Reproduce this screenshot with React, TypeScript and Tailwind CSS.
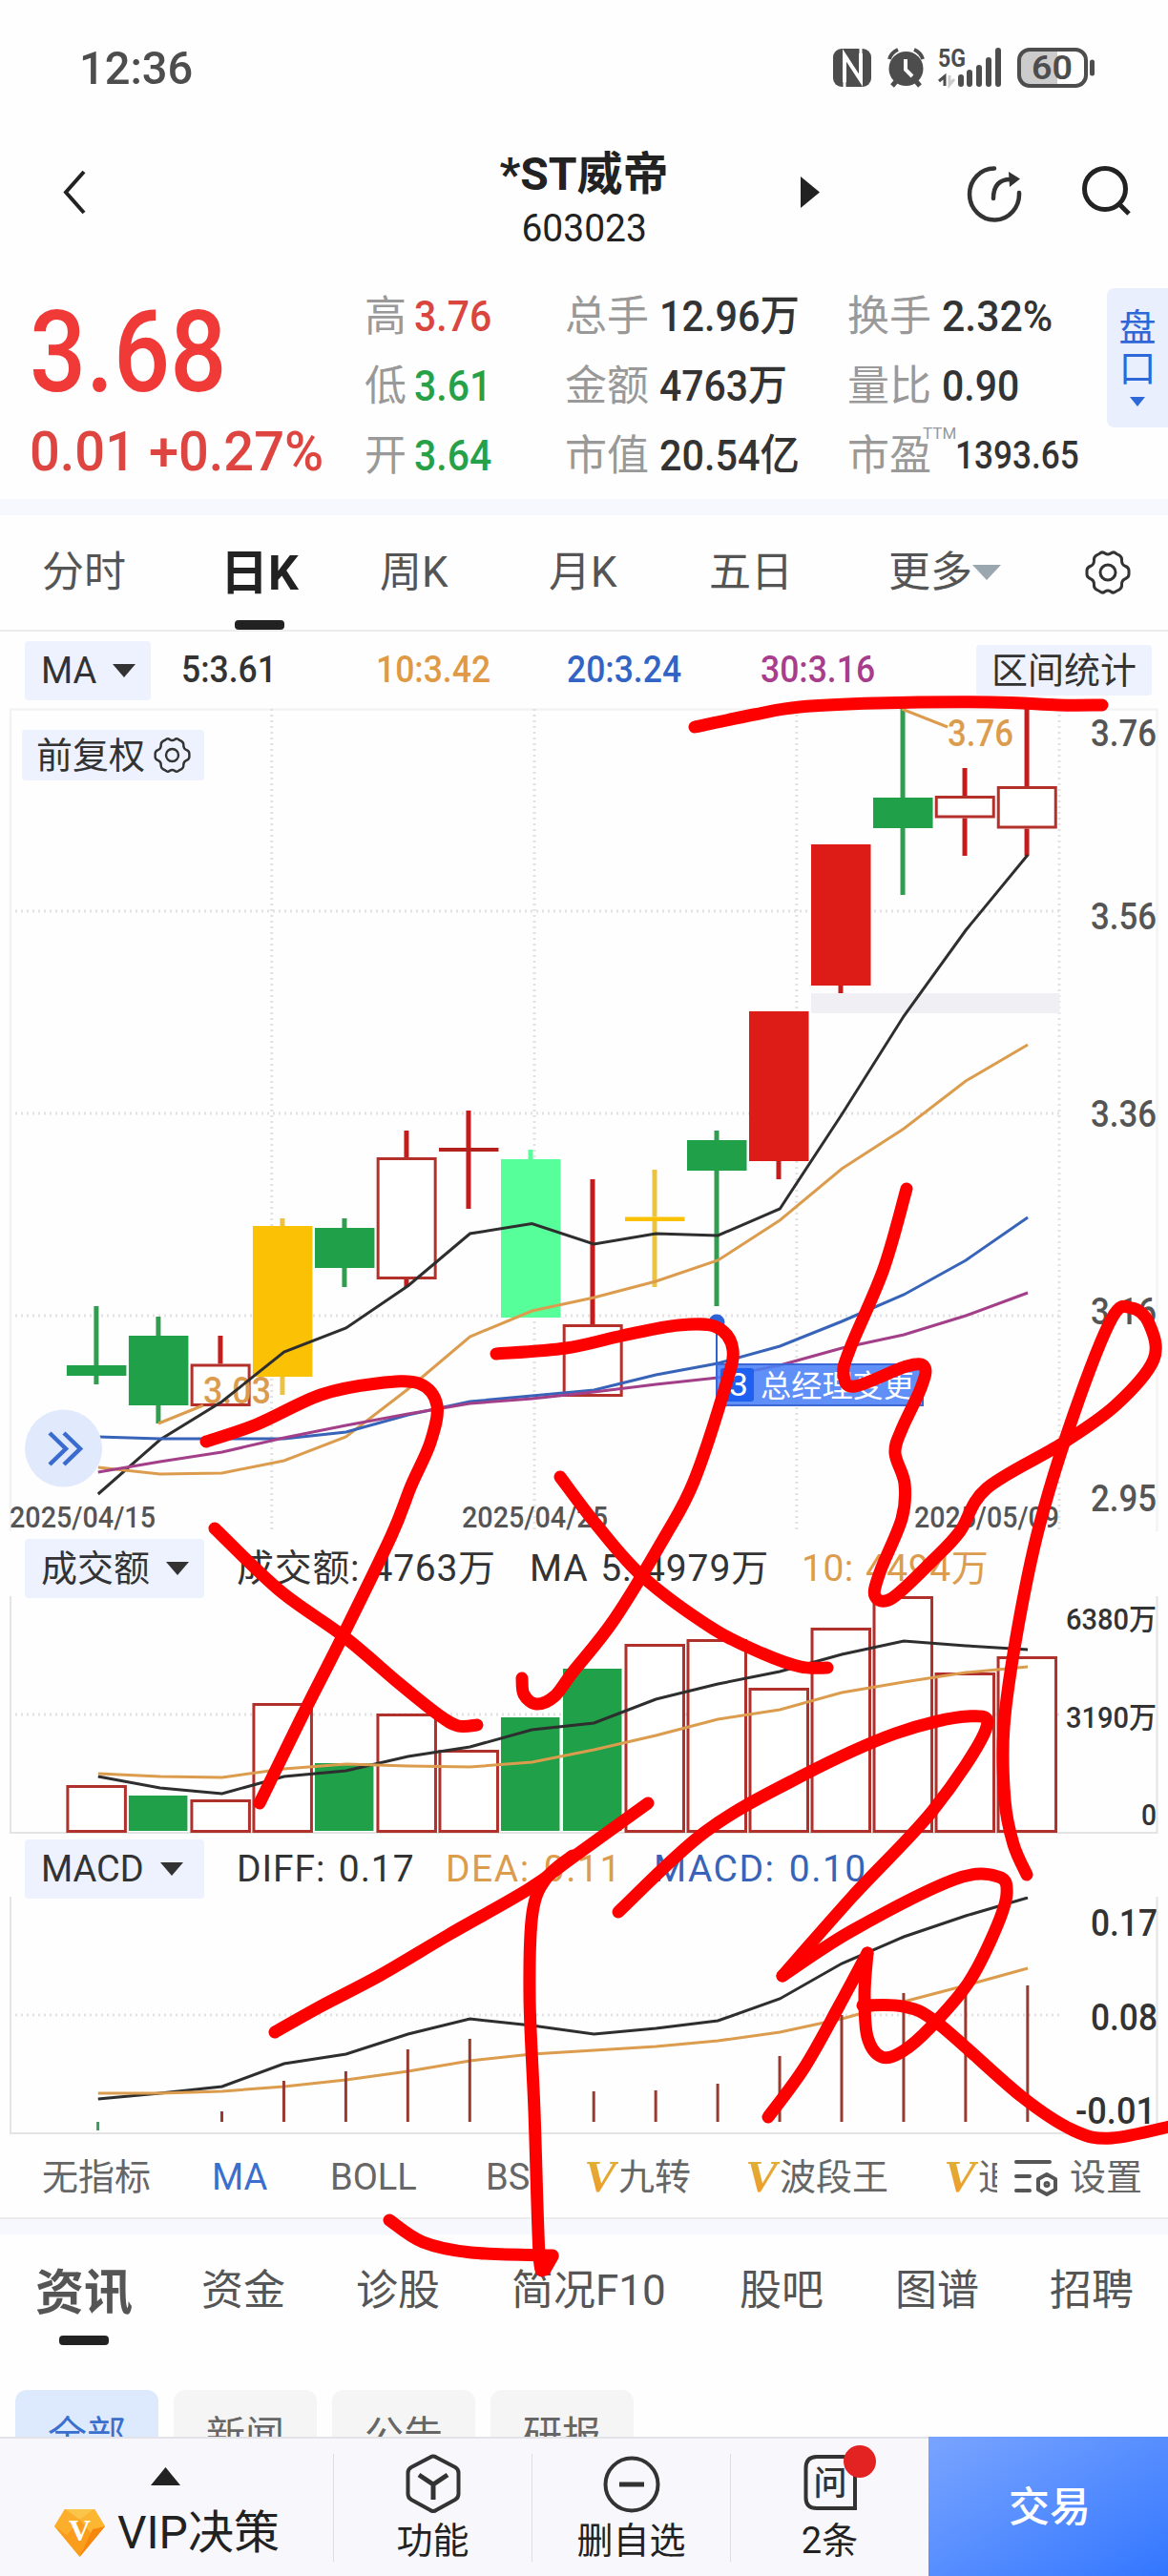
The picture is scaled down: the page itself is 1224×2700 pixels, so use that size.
import type { ReactNode } from "react"

type Candle = {
  kind: "up" | "down" | "limit" | "gold" | "mint"
  high: number
  top: number
  bottom: number
  low: number
}

const RED = "#b3302b"
const ORANGE = "#dc9c4e"

const candles: Candle[] = [
  { kind: "down", high: 1369, top: 1431, bottom: 1442, low: 1451 },
  { kind: "down", high: 1380, top: 1400, bottom: 1473, low: 1492 },
  { kind: "up", high: 1400, top: 1429.5, bottom: 1474, low: 1474 },
  { kind: "gold", high: 1277, top: 1285, bottom: 1443, low: 1462 },
  { kind: "down", high: 1277, top: 1287, bottom: 1329, low: 1349 },
  { kind: "up", high: 1185, top: 1213, bottom: 1341, low: 1349 },
  { kind: "up", high: 1164, top: 1203, bottom: 1207, low: 1267 },
  { kind: "mint", high: 1205, top: 1215, bottom: 1381, low: 1381 },
  { kind: "up", high: 1236, top: 1388, bottom: 1464, low: 1464 },
  { kind: "gold", high: 1226, top: 1275.5, bottom: 1280, low: 1349 },
  { kind: "down", high: 1185, top: 1195, bottom: 1227, low: 1369 },
  { kind: "limit", high: 1060, top: 1060, bottom: 1217, low: 1236 },
  { kind: "limit", high: 885, top: 885, bottom: 1033, low: 1041 },
  { kind: "down", high: 742, top: 836, bottom: 868, low: 938 },
  { kind: "up", high: 805, top: 834, bottom: 857.5, low: 897 },
  { kind: "up", high: 742, top: 824, bottom: 868.5, low: 897 },
]

const fills = { up: "#ffffff", down: "#1fa049", limit: "#de1c17", gold: "#fac105", mint: "#57ff9a" }
const wicks = { up: "#c41c1a", down: "#329c50", limit: "#c41c1a", gold: "#ecc243", mint: "#57ff9a" }

const ma5 = [1566, 1509, 1469, 1417, 1392, 1347.7, 1293, 1282.5, 1304, 1293, 1295, 1267, 1168, 1065, 975, 896]
const ma10 = [1538, 1545, 1544, 1531, 1506, 1456, 1401, 1374, 1360, 1343, 1321, 1279, 1225, 1183, 1133, 1095]
const ma20 = [1506, 1508, 1508, 1508, 1501, 1483, 1469, 1463, 1457, 1441, 1429, 1411, 1385, 1357, 1321, 1276]
const ma30 = [1543, 1532, 1522, 1507, 1494, 1482, 1471, 1466, 1459, 1451, 1444, 1431, 1413, 1399, 1379, 1355]

const volumes = [1871, 1882, 1886, 1785, 1848, 1796, 1834, 1800, 1749, 1723, 1718, 1769, 1706, 1673, 1753, 1736]
const volumeDown = [1, 4, 7, 8]
const volMa5 = [1862, 1874, 1880, 1862, 1856, 1841, 1831, 1813, 1806, 1781, 1765, 1752, 1734, 1720, 1725, 1729]
const volMa10 = [1859, 1862, 1863, 1854, 1849, 1851, 1852, 1847, 1834, 1819, 1802, 1792, 1774, 1763, 1753, 1747]

const diff = [2200, 2194, 2187, 2163, 2153, 2132, 2116, 2123, 2132, 2126, 2118, 2095, 2058, 2030, 2008, 1989]
const dea = [2194, 2194, 2192, 2187, 2180, 2171, 2160, 2153, 2149, 2145, 2139, 2130, 2116, 2098, 2081, 2063]
const macd = [2233, 2224, 2213, 2181, 2171, 2148, 2137, 2180, 2192, 2191, 2184, 2155, 2112, 2089, 2084, 2081]

const strokes: number[][][] = [
  [[728, 762], [790, 749], [838, 741], [918, 737], [1038, 736], [1109, 739], [1155, 739]],
  [[216, 1511], [269, 1493], [336, 1462], [395, 1450], [439, 1450], [458, 1473], [451, 1512], [431, 1557], [410, 1610], [360, 1713], [316, 1800], [272, 1890]],
  [[225, 1602], [293, 1667], [360, 1715], [419, 1765], [459, 1797], [480, 1809], [500, 1808]],
  [[520, 1419], [593, 1413], [652, 1400], [711, 1389], [751, 1391], [768, 1415], [759, 1457], [727, 1553], [697, 1610], [644, 1697], [600, 1753], [581, 1778], [562, 1786], [549, 1776], [547, 1759]],
  [[587, 1548], [625, 1598], [674, 1653], [747, 1707], [799, 1733], [839, 1747], [867, 1748]],
  [[950, 1246], [926, 1330], [891, 1413], [884, 1440], [896, 1453], [950, 1432], [969, 1433], [965, 1455], [945, 1498], [938, 1523], [948, 1555], [945, 1592], [922, 1648], [917, 1673], [935, 1675], [978, 1635], [1006, 1605], [1034, 1560], [1113, 1513], [1169, 1473], [1209, 1425], [1204, 1387], [1186, 1371], [1165, 1382], [1125, 1483], [1089, 1600], [1066, 1710], [1052, 1810], [1053, 1887], [1062, 1933], [1076, 1965]],
  [[679, 1890], [600, 1947], [554, 1980], [470, 2028], [399, 2070], [336, 2103], [288, 2130]],
  [[600, 1945], [573, 1968], [558, 2005], [555, 2093], [560, 2213], [565, 2363], [570, 2378]],
  [[408, 2327], [443, 2350], [494, 2361], [579, 2364]],
  [[579, 2365], [571, 2379]],
  [[648, 2004], [739, 1920], [839, 1862], [938, 1817], [1014, 1799], [1033, 1813], [978, 1897], [894, 1987], [820, 2071]],
  [[820, 2071], [894, 2023], [1000, 1970], [1046, 1967], [1055, 1985], [1043, 2023], [1015, 2078], [975, 2125], [946, 2150], [924, 2156], [909, 2135], [906, 2090], [909, 2047]],
  [[909, 2047], [879, 2103], [843, 2167], [805, 2219]],
  [[904, 2102], [946, 2103], [982, 2120], [1070, 2197], [1125, 2233], [1165, 2241], [1230, 2228]],
]

function smooth(points: number[][]) {
  let d = `M${points[0][0]} ${points[0][1]}`
  for (let i = 0; i < points.length - 1; i++) {
    const p0 = points[i - 1] ?? points[i]
    const p1 = points[i]
    const p2 = points[i + 1]
    const p3 = points[i + 2] ?? p2
    d += ` C${p1[0] + (p2[0] - p0[0]) / 6} ${p1[1] + (p2[1] - p0[1]) / 6} ${p2[0] - (p3[0] - p1[0]) / 6} ${p2[1] - (p3[1] - p1[1]) / 6} ${p2[0]} ${p2[1]}`
  }
  return d
}

const centerX = (i: number) => 100.9 + i * 65.01

function Series({ values, color }: { values: number[]; color: string }) {
  const points = values.map((y, i) => `${102.8 + i * 64.95},${y}`).join(" ")
  return <polyline points={points} fill="none" stroke={color} strokeWidth="3" />
}

function GridLine({ x1, y1, x2, y2 }: { x1: number; y1: number; x2: number; y2: number }) {
  return <line x1={x1} y1={y1} x2={x2} y2={y2} stroke="#e2e2e2" strokeWidth="3" strokeDasharray="2 4" />
}

function Label({ x, y, size, width, color, children, weight = 500 }: { x: number; y: number; size: number; width: number; color: string; children: string; weight?: number }) {
  return (
    <text x={x} y={y} fontSize={size} fill={color} fontWeight={weight} textLength={width} lengthAdjust="spacingAndGlyphs">
      {children}
    </text>
  )
}

function Gear({ size }: { size: number }) {
  return (
    <svg width={size} height={size} viewBox="0 0 48 48" fill="none" stroke="#333" strokeWidth="3">
      <path d="M15 4.500Q18 1.500 21 4q3 2 6 0 3-2.500 6 .5l3 1.500q3 2 2.500 5.500 0 4.500 4 6Q46 19 46 22v4q0 3-3.500 4.500-4 1.500-4 6Q39 40 36 42l-3 1.500q-3 3-6 .5-3-2-6 0-3 2.500-6-.5L12 42q-3-2-2.500-5.500 0-4.500-4-6Q2 29 2 26v-4q0-3 3.500-4.500 4-1.500 4-6Q9 8 12 6z" strokeLinejoin="round" />
      <circle cx="24" cy="24" r="8" />
    </svg>
  )
}

function Caret() {
  return (
    <svg width="24" height="14" viewBox="0 0 24 14" fill="#333">
      <path d="M0 0h24L12 14z" />
    </svg>
  )
}

function StatusBar() {
  return (
    <div className="flex h-[142px] items-center justify-between pr-[76px] pl-[83px] text-[#4d4d4d]">
      <span className="origin-left scale-x-[0.96] text-[49px] leading-none font-medium">12:36</span>
      <svg width="276" height="44" viewBox="871 49 276 44" fill="none" stroke="#4d4d4d">
        <rect x="872" y="51" width="40" height="40" rx="9" fill="#4d4d4d" stroke="none" />
        <path d="M884 86V58L901 84V56" stroke="#fff" strokeWidth="4" />
        <path d="M884 58V91M901 51V84" stroke="#fff" strokeWidth="3" />
        <circle cx="948.500" cy="72" r="18" fill="#4d4d4d" stroke="none" />
        <path d="M931 62q2-7 9-10M966 62q-2-7-9-10" strokeWidth="4" />
        <path d="M934 90l6-7M963 90l-6-7" strokeWidth="5" />
        <path d="M948 62v11l7 7" stroke="#fff" strokeWidth="4" />
        <text x="982" y="70" fontSize="25" fontWeight="700" fill="#4d4d4d" stroke="none" textLength="29" lengthAdjust="spacingAndGlyphs">5G</text>
        <path d="M989 90V80l-6 5" strokeWidth="3" />
        <path d="M994 79v10l5-6" stroke="#ccc" strokeWidth="3" />
        <path d="M1006 81v7M1015 76v12M1025 71v17M1035 63v25M1045 53v35" strokeWidth="6" strokeLinecap="round" />
        <path d="M1076 52h31v38h-31q-9-1-9-10V62q0-9 9-10z" fill="#ccc" stroke="none" />
        <rect x="1067" y="52" width="70" height="38" rx="11" strokeWidth="4" />
        <path d="M1143.500 65v12" strokeWidth="5" strokeLinecap="round" />
        <text x="1080" y="83" fontSize="35" fontWeight="600" fill="#4d4d4d" stroke="none" textLength="43" lengthAdjust="spacingAndGlyphs">60</text>
      </svg>
    </div>
  )
}

function TitleBar() {
  return (
    <header className="grid h-[138px] grid-cols-[432px_360px_1fr] text-[#222]">
      <svg className="mt-[35px] ml-[64px]" width="30" height="50" viewBox="0 0 30 50" fill="none" stroke="#222" strokeWidth="4">
        <path d="M24 3L5 24.500L24 46" />
      </svg>
      <div className="flex flex-col items-center pt-[17px]">
        <h1 className="text-[48px] leading-[48px] font-bold">*ST威帝</h1>
        <p className="mt-[9px] scale-x-[0.95] text-[41px] leading-[46px]">603023</p>
      </div>
      <div className="flex items-start">
        <svg className="mt-[43px] ml-[47px]" width="20" height="33" viewBox="0 0 20 33" fill="#222">
          <path d="M0 0L20 16.500L0 33z" />
        </svg>
        <svg className="mt-[29px] ml-[151px]" width="64" height="64" viewBox="0 0 64 64" fill="none" stroke="#333" strokeWidth="4.500">
          <path d="M32 5.500A26 27 0 1 0 58 31" strokeLinecap="round" />
          <path d="M31 37Q31 17 49 17" strokeLinecap="round" />
          <path d="M47 9L59 16.500L48 25z" fill="#333" stroke="none" />
        </svg>
        <svg className="mt-[31px] ml-[58px]" width="56" height="56" viewBox="0 0 56 56" fill="none" stroke="#222" strokeWidth="5">
          <circle cx="26" cy="25" r="21.500" />
          <path d="M41 41L51 51" />
        </svg>
      </div>
    </header>
  )
}

function Stat({ label, value, color = "text-[#333]", gap = "ml-[11px]", scale = "scale-x-[0.91]" }: { label: string; value: string; color?: string; gap?: string; scale?: string }) {
  return (
    <div className="flex h-[73px] items-center whitespace-nowrap">
      <span className="text-[44px] leading-none text-[#999]">{label}</span>
      <span className={`${gap} ${color} ${scale} origin-left text-[45px] leading-none font-medium`}>{value}</span>
    </div>
  )
}

function Quote() {
  return (
    <section className="flex h-[243px]">
      <div className="w-[382px] pl-[31px]">
        <div className="mt-[28px] h-[120px] origin-left scale-x-[0.875] text-[119px] leading-[124px] font-medium text-[#f03a38]">3.68</div>
        <div className="mt-[13px] origin-left scale-x-[0.965] text-[58px] leading-[64px] font-medium whitespace-nowrap text-[#de4440]">0.01 +0.27%</div>
      </div>
      <div className="grid h-[219px] w-[778px] grid-cols-[210px_296px_272px] pt-[15px]">
        <Stat label="高" value="3.76" color="text-[#d9453f]" gap="ml-[8px]" />
        <Stat label="总手" value="12.96万" scale="scale-x-[0.92]" />
        <Stat label="换手" value="2.32%" scale="scale-x-[0.95]" />
        <Stat label="低" value="3.61" color="text-[#27a148]" gap="ml-[8px]" />
        <Stat label="金额" value="4763万" />
        <Stat label="量比" value="0.90" />
        <Stat label="开" value="3.64" color="text-[#27a148]" gap="ml-[8px]" />
        <Stat label="市值" value="20.54亿" scale="scale-x-[0.92]" />
        <div className="flex h-[73px] items-center whitespace-nowrap">
          <span className="text-[44px] leading-none text-[#999]">市盈</span>
          <span className="-ml-[9px] w-[34px] pb-[46px] text-[17px] leading-none text-[#999]">TTM</span>
          <span className="origin-left scale-x-[0.88] text-[40px] leading-none font-medium text-[#333]">1393.65</span>
        </div>
      </div>
      <div className="mt-[22px] flex h-[146px] w-[64px] flex-col items-center rounded-l-[8px] bg-[#e9effd] pt-[21px] text-[39px] leading-[43px] text-[#2e67d8]">
        <span>盘</span>
        <span>口</span>
        <svg className="mt-[7px]" width="16" height="10" viewBox="0 0 16 10" fill="#2e67d8">
          <path d="M0 0h16L8 10z" />
        </svg>
      </div>
    </section>
  )
}

function PeriodTabs() {
  return (
    <nav className="grid h-[122px] grid-cols-[187px_167px_177px_168px_188px_206px_1fr] items-center border-b-2 border-[#ececec] pl-[44px] text-[44px] leading-none whitespace-nowrap text-[#555]">
      <span>分时</span>
      <div className="flex h-full w-[82px] flex-col items-center justify-end">
        <span className="text-[50px] font-bold text-[#222]">日K</span>
        <i className="mt-[24px] h-[10px] w-[52px] rounded-[4px] bg-[#222]" />
      </div>
      <span>周K</span>
      <span>月K</span>
      <span>五日</span>
      <span className="flex items-center">
        更多
        <svg width="30" height="16" viewBox="0 0 30 16" fill="#9aa7ae">
          <path d="M0 0h30L15 16z" />
        </svg>
      </span>
      <Gear size={48} />
    </nav>
  )
}

function Chip({ children, className }: { children: string; className: string }) {
  return (
    <div className={`${className} flex h-[62px] items-center rounded-[4px] bg-[#edf2fe] pl-[17px] text-[38px] leading-none whitespace-nowrap text-[#333]`}>
      <span className="mr-[17px]">{children}</span>
      <Caret />
    </div>
  )
}

function PriceChart() {
  return (
    <svg className="block" width="1224" height="863" viewBox="0 742 1224 863">
      <path d="M11 1605V743.500H1212.500V1605" fill="none" stroke="#f3f3f3" strokeWidth="2.500" />
      {[284.7, 560, 834.8, 1110].map((x) => (
        <GridLine key={x} x1={x} y1={743} x2={x} y2={1604} />
      ))}
      {[955, 1167, 1379].map((y) => (
        <GridLine key={y} x1={16} y1={y} x2={1110} y2={y} />
      ))}
      <rect x="850" y="1041" width="260.500" height="21" fill="#f0eff4" />
      {candles.map((c, i) => {
        const x = centerX(i)
        const hollow = c.kind === "up" && c.bottom - c.top > 6
        return (
          <g key={i}>
            <line x1={x} x2={x} y1={c.high} y2={c.top} stroke={wicks[c.kind]} strokeWidth="5" />
            <line x1={x} x2={x} y1={c.bottom} y2={c.low} stroke={wicks[c.kind]} strokeWidth="5" />
            {hollow ? (
              <rect x={x - 29.8} y={c.top + 1.5} width="60" height={c.bottom - c.top - 3} fill="#fff" stroke={RED} strokeWidth="3" />
            ) : (
              <rect x={x - 31} y={c.top} width="62.500" height={c.bottom - c.top} fill={c.kind === "up" ? "#b3201e" : fills[c.kind]} />
            )}
          </g>
        )
      })}
      <path d="M166 1492L213 1473M945 743L993 762" stroke={ORANGE} strokeWidth="3" />
      <Label x={213} y={1471} size={38} width={71} color={ORANGE}>3.03</Label>
      <Label x={993} y={782} size={38} width={69} color={ORANGE}>3.76</Label>
      <Series values={ma5} color="#2e2e2e" />
      <Series values={ma10} color={ORANGE} />
      <Series values={ma20} color="#3763b8" />
      <Series values={ma30} color="#a33f88" />
      <path d="M751 1385V1430" stroke="#2e63d0" strokeWidth="2" />
      <circle cx="751" cy="1386" r="8.500" fill="#2e63d8" />
      <rect x="751" y="1430" width="216" height="43" fill="#4a80f7" fillOpacity="0.88" stroke="#3b68d4" strokeWidth="2" />
      <rect x="755" y="1434" width="35" height="35" rx="3" fill="#1e60f0" />
      <Label x={764} y={1463} size={34} width={20} color="#fff" weight={400}>3</Label>
      <Label x={797} y={1464} size={32} width={161} color="#fff" weight={400}>总经理变更</Label>
      <circle cx="66.600" cy="1518" r="40.500" fill="#e1eafc" />
      <path d="M52 1502L69 1518.500L52 1535M67 1502L84 1518.500L67 1535" fill="none" stroke="#3a6cd0" strokeWidth="4.500" />
      <Label x={1143} y={782} size={38} width={69} color="#555">3.76</Label>
      <Label x={1143} y={974} size={38} width={69} color="#555">3.56</Label>
      <Label x={1143} y={1181} size={38} width={69} color="#555">3.36</Label>
      <Label x={1143} y={1388} size={38} width={69} color="#555">3.16</Label>
      <Label x={1143} y={1584} size={38} width={69} color="#555">2.95</Label>
      <Label x={10} y={1601} size={31} width={153} color="#555">2025/04/15</Label>
      <Label x={484} y={1601} size={31} width={153} color="#555">2025/04/25</Label>
      <Label x={958} y={1601} size={31} width={152} color="#555">2025/05/09</Label>
    </svg>
  )
}

function VolumeChart() {
  return (
    <svg className="block" width="1224" height="250" viewBox="0 1673 1224 250">
      <path d="M11 1673V1921H1212.500V1673" fill="none" stroke="#e4e4e4" strokeWidth="2" />
      <GridLine x1={16} y1={1797} x2={1110} y2={1797} />
      {volumes.map((top, i) =>
        volumeDown.includes(i) ? (
          <rect key={i} x={centerX(i) - 31} y={top} width="61.500" height={1919 - top} fill="#1fa049" />
        ) : (
          <rect key={i} x={centerX(i) - 30} y={top + 1.5} width="60.500" height={1918 - top} fill="#fff" stroke="#b0302c" strokeWidth="3" />
        ),
      )}
      <Series values={volMa5} color="#2e2e2e" />
      <Series values={volMa10} color={ORANGE} />
      <Label x={1117} y={1708} size={31} width={95} color="#333">6380万</Label>
      <Label x={1117} y={1811} size={31} width={95} color="#333">3190万</Label>
      <Label x={1196} y={1913} size={31} width={16} color="#333">0</Label>
    </svg>
  )
}

function MacdChart() {
  return (
    <svg className="block" width="1224" height="250" viewBox="0 1988 1224 250">
      <path d="M11 1988V2236H1212.500V1988" fill="none" stroke="#e4e4e4" strokeWidth="2" />
      <GridLine x1={16} y1={2112} x2={1110} y2={2112} />
      <Series values={diff} color="#2e2e2e" />
      <Series values={dea} color={ORANGE} />
      {macd.map((y, i) => (
        <line key={i} x1={102.6 + i * 64.95} x2={102.6 + i * 64.95} y1={2224} y2={y} stroke={y > 2224 ? "#3c9a5a" : "#983a30"} strokeWidth="3" />
      ))}
      <Label x={1143} y={2029} size={38} width={70} color="#333">0.17</Label>
      <Label x={1143} y={2128} size={38} width={70} color="#333">0.08</Label>
      <Label x={1127} y={2226} size={38} width={84} color="#333">-0.01</Label>
    </svg>
  )
}

function VipMark() {
  return (
    <svg className="shrink-0" width="34" height="32" viewBox="0 0 34 32">
      <defs>
        <linearGradient id="vip" x1="0" y1="0" x2="0" y2="1">
          <stop offset="0" stopColor="#dcb23c" />
          <stop offset="1" stopColor="#f19a25" />
        </linearGradient>
      </defs>
      <text x="-2" y="31" fontSize="46" fontWeight="700" fontStyle="italic" fontFamily="Liberation Serif, serif" fill="url(#vip)" textLength="34" lengthAdjust="spacingAndGlyphs">V</text>
    </svg>
  )
}

function IndicatorTabs() {
  return (
    <nav className="flex h-[88px] items-center border-b-2 border-[#ececec] pt-[2px] pl-[44px] text-[38px] leading-none whitespace-nowrap text-[#666]">
      <div className="grid w-[1001px] grid-cols-[178px_124px_163px_105px_169px_208px_54px] items-center overflow-hidden py-1">
        <span>无指标</span>
        <span className="text-[#3a6fcd]">MA</span>
        <span>BOLL</span>
        <span>BS</span>
        <span className="flex items-center"><VipMark />九转</span>
        <span className="flex items-center"><VipMark />波段王</span>
        <span className="flex items-center overflow-hidden"><VipMark />追</span>
      </div>
      <svg className="ml-[17px]" width="48" height="40" viewBox="0 0 48 40" fill="none" stroke="#555" strokeWidth="4" strokeLinecap="round">
        <path d="M3 4H38M3 19H17M3 34H17" />
        <path d="M35 17l9 5v11l-9 5-9-5V22z" strokeLinejoin="round" />
        <circle cx="35" cy="27.500" r="2" strokeWidth="3" />
      </svg>
      <span className="ml-[11px]">设置</span>
    </nav>
  )
}

function News() {
  return (
    <section className="h-[212px] overflow-hidden">
      <nav className="grid h-[116px] grid-cols-[174px_162px_163px_239px_163px_162px_1fr] items-center pl-[37px] text-[44px] leading-none whitespace-nowrap text-[#555]">
        <div className="flex h-full w-[102px] flex-col items-center justify-end">
          <span className="text-[51px] font-bold">资讯</span>
          <i className="mt-[19px] h-[10px] w-[52px] rounded-[4px] bg-[#222]" />
        </div>
        <span className="pt-[2px]">资金</span>
        <span className="pt-[2px]">诊股</span>
        <span className="pt-[2px]">简况F10</span>
        <span className="pt-[2px]">股吧</span>
        <span className="pt-[2px]">图谱</span>
        <span className="pt-[2px]">招聘</span>
      </nav>
      <div className="mt-[47px] flex gap-[16px] pl-[16px] text-[41px] leading-none text-[#666]">
        <span className="h-[100px] w-[150px] rounded-[12px] bg-[#dde9fd] pt-[28px] text-center text-[#3a6fcd]">全部</span>
        <span className="h-[100px] w-[150px] rounded-[12px] bg-[#f5f5f5] pt-[28px] text-center">新闻</span>
        <span className="h-[100px] w-[150px] rounded-[12px] bg-[#f5f5f5] pt-[28px] text-center">公告</span>
        <span className="h-[100px] w-[150px] rounded-[12px] bg-[#f5f5f5] pt-[28px] text-center">研报</span>
      </div>
    </section>
  )
}

function ActionItem({ label, children }: { label: string; children: ReactNode }) {
  return (
    <div className="flex h-[113px] w-[208px] flex-col items-center border-l border-[#dcdce4] text-[38px] leading-none text-[#222]">
      <div className="h-[68px]">{children}</div>
      <span className="mt-[4px]">{label}</span>
    </div>
  )
}

function BottomBar() {
  return (
    <footer className="flex h-[146px] items-center border-t-2 border-[#e2e2e8] bg-[#f8f7fc]">
      <div className="flex h-full w-[349px] flex-col pl-[56px]">
        <svg className="mt-[30px] ml-[102px]" width="31" height="19" viewBox="0 0 31 19" fill="#222">
          <path d="M15.500 0L31 19H0z" />
        </svg>
        <div className="mt-[24px] flex items-center text-[48px] leading-none whitespace-nowrap text-[#222]">
          <svg className="mr-[12px]" width="55" height="52" viewBox="0 0 55 52">
            <path d="M12 1H43L54 19L27.500 51L1 19z" fill="#fb9d1c" />
            <path d="M12 1H43L27.500 12z" fill="#fbc54a" />
            <path d="M12 1L27.500 12L14 28L1 19z" fill="#fdaf2b" />
            <path d="M43 1L27.500 12L41 28L54 19z" fill="#fcb632" />
            <path d="M27.500 51L54 19L41 22z" fill="#f6870f" />
            <text x="27.500" y="34" textAnchor="middle" fontSize="32" fontWeight="700" fontFamily="Liberation Serif, serif" fill="#fff">V</text>
          </svg>
          VIP决策
        </div>
      </div>
      <ActionItem label="功能">
        <svg width="58" height="62" viewBox="0 0 58 62" fill="none" stroke="#333" strokeWidth="4">
          <path d="M26 3.500q3-2 6 0L52 14q3.500 2 3.500 6V42q0 4-3.500 6L32 59q-3 2-6 0L6 48q-3.500-2-3.500-6V20q0-4 3.500-6z" />
          <path d="M14 22L29 32L44 22M29 32V48" strokeWidth="5" />
        </svg>
      </ActionItem>
      <ActionItem label="删自选">
        <svg width="60" height="62" viewBox="0 0 60 62" fill="none" stroke="#333" strokeWidth="4">
          <circle cx="30" cy="32" r="27.500" />
          <path d="M17 32H43" strokeWidth="5" />
        </svg>
      </ActionItem>
      <ActionItem label="2条">
        <div className="relative">
          <svg width="56" height="62" viewBox="0 0 56 62" fill="none" stroke="#333" strokeWidth="4">
            <path d="M54 15V57H14Q2.500 57 2.500 46V15Q2.500 3 14 3H42Q54 3 54 15z" />
            <text x="28" y="43" textAnchor="middle" fontSize="35" fontWeight="500" fill="#333" stroke="none">问</text>
          </svg>
          <i className="absolute -top-[9px] -right-[20px] h-[34px] w-[34px] rounded-full bg-[#e32321]" />
        </div>
      </ActionItem>
      <button className="-mt-[2px] flex h-[146px] grow items-center justify-center bg-linear-to-br from-[#79a4ff] to-[#3276ff] pt-[2px] pl-[3px] text-[43px] leading-none font-medium text-white">交易</button>
    </footer>
  )
}

export default function App() {
  return (
    <main className="relative h-[2700px] w-[1224px] overflow-hidden bg-[#fefefe] font-[Roboto,'Noto_Sans_CJK_SC',sans-serif]">
      <StatusBar />
      <TitleBar />
      <Quote />
      <div className="h-[17px] bg-[#f6f8fd]" />
      <PeriodTabs />
      <div className="grid h-[80px] grid-cols-[164px_204px_200px_203px_226px_184px] items-center pt-px pl-[26px] text-[39px] leading-none font-medium whitespace-nowrap text-[#333]">
        <Chip className="w-[132px] font-normal">MA</Chip>
        <span className="origin-left scale-x-[0.91]">5:3.61</span>
        <span className="origin-left scale-x-[0.91] text-[#e09a45]">10:3.42</span>
        <span className="origin-left scale-x-[0.91] text-[#3164c4]">20:3.24</span>
        <span className="origin-left scale-x-[0.91] text-[#a83d8c]">30:3.16</span>
        <span className="flex h-[53px] items-center justify-center rounded-[4px] bg-[#edf2fe] text-[38px] font-normal">区间统计</span>
      </div>
      <div className="relative h-[863px]">
        <PriceChart />
        <div className="absolute top-[23px] left-[23px] flex h-[53px] w-[191px] items-center gap-[9px] rounded-[4px] bg-[#edf2fe] pl-[15px] text-[38px] leading-none whitespace-nowrap text-[#333]">
          前复权
          <Gear size={39} />
        </div>
      </div>
      <div className="mt-[8px] grid h-[60px] grid-cols-[222px_307px_285px_1fr] items-center pl-[26px] text-[39px] leading-none whitespace-nowrap text-[#333]">
        <Chip className="w-[188px]">成交额</Chip>
        <span className="tracking-[0.7px] [word-spacing:2px]">成交额: 4763万</span>
        <span className="tracking-[0.9px] [word-spacing:2px]">MA 5: 4979万</span>
        <span className="tracking-[0.5px] [word-spacing:2px] text-[#dc9c4e]">10: 4494万</span>
      </div>
      <VolumeChart />
      <div className="mt-[5px] grid h-[60px] grid-cols-[222px_219px_218px_1fr] items-center pl-[26px] text-[39px] leading-none whitespace-nowrap text-[#333]">
        <Chip className="w-[188px]">MACD</Chip>
        <span className="tracking-[0.9px] [word-spacing:3px]">DIFF: 0.17</span>
        <span className="tracking-[1.5px] [word-spacing:3px] text-[#dc9c4e]">DEA: 0.11</span>
        <span className="tracking-[1.5px] [word-spacing:3px] text-[#3763b8]">MACD: 0.10</span>
      </div>
      <MacdChart />
      <IndicatorTabs />
      <div className="h-[16px] bg-[#f6f8fd]" />
      <News />
      <BottomBar />
      <svg className="pointer-events-none absolute inset-0" width="1224" height="2700" viewBox="0 0 1224 2700" fill="none" stroke="#ff0000" strokeWidth="13" strokeLinecap="round" strokeLinejoin="round">
        {strokes.map((points, i) => (
          <path key={i} d={smooth(points)} />
        ))}
      </svg>
    </main>
  )
}
